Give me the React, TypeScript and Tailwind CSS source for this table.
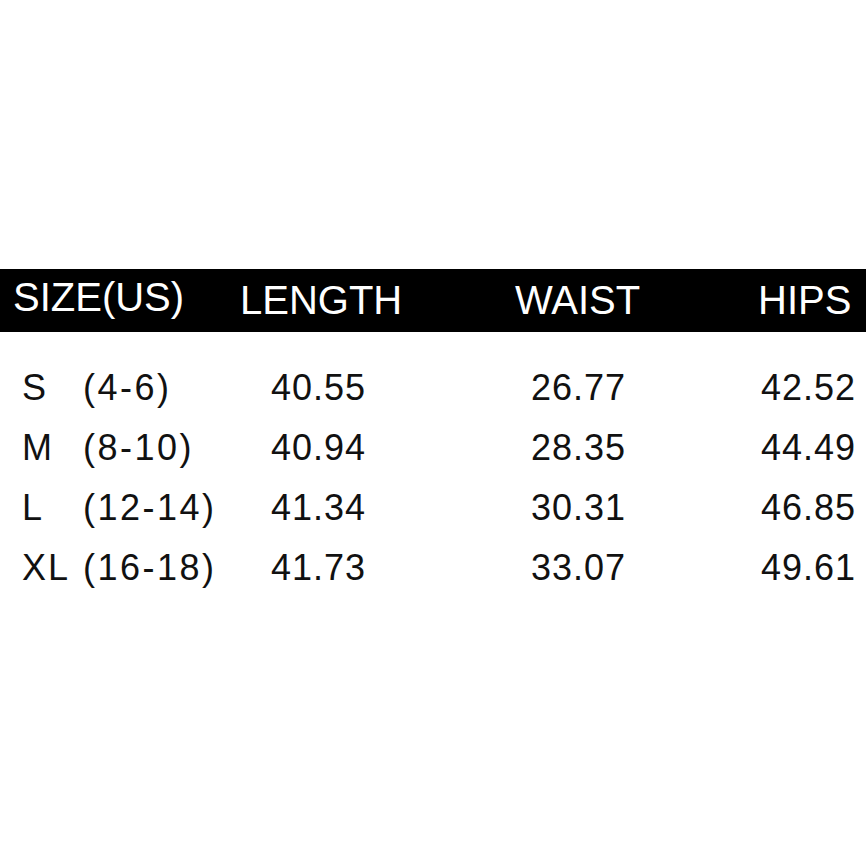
import React from 'react';

const rows = [
  { size: 'S', range: '(4-6)', length: '40.55', waist: '26.77', hips: '42.52' },
  { size: 'M', range: '(8-10)', length: '40.94', waist: '28.35', hips: '44.49' },
  { size: 'L', range: '(12-14)', length: '41.34', waist: '30.31', hips: '46.85' },
  { size: 'XL', range: '(16-18)', length: '41.73', waist: '33.07', hips: '49.61' },
];

const App: React.FC = () => {
  return (
    <div className="w-[866px] h-[866px] bg-white pt-[269px] font-['Liberation_Sans',Arial,sans-serif] overflow-hidden">
      {/* Header bar */}
      <div className="flex items-start h-[63px] bg-black text-white text-[40px] pl-[13px]">
        <div className="w-[227px] leading-[57px]">SIZE(US)</div>
        <div className="w-[275px] leading-[63px]">LENGTH</div>
        <div className="w-[243px] leading-[63px]">WAIST</div>
        <div className="flex-1 leading-[63px]">HIPS</div>
      </div>

      <div className="pt-[26px] text-[#111] text-[36px] leading-[60px] tracking-[1px]">
        {rows.map((row) => (
          <div key={row.size} className="flex pl-[22px]">
            <div className="w-[249px] flex">
              <span className="w-[61px] tracking-[2px]">{row.size}</span>
              <span className="tracking-[2.5px]">{row.range}</span>
            </div>
            <div className="w-[260px]">{row.length}</div>
            <div className="w-[230px]">{row.waist}</div>
            <div className="flex-1">{row.hips}</div>
          </div>
        ))}
      </div>
    </div>
  );
};

export default App;
